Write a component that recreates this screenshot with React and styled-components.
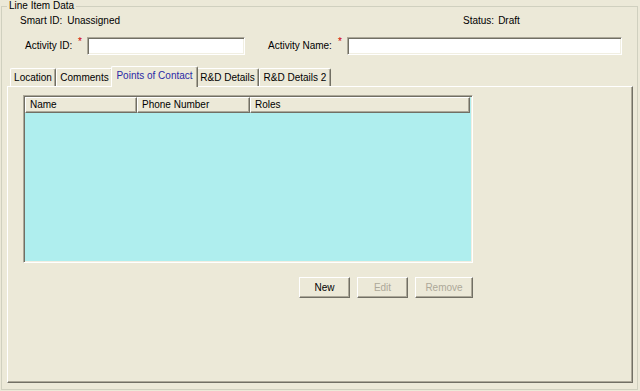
import React from "react";
import styled, { createGlobalStyle } from "styled-components";

const GlobalStyle = createGlobalStyle`
  html, body { margin: 0; padding: 0; background: #ece9d8; }
  body {
    font-family: "Liberation Sans", Arial, sans-serif;
    font-size: 10px;
    color: #000;
  }
  * { box-sizing: border-box; }
`;

const Window = styled.div`
  width: 640px;
  height: 391px;
  background: #ece9d8;
  overflow: hidden;
`;

const GroupBox = styled.fieldset`
  margin: 0 0 0 1px;
  width: 637px;
  height: 390px;
  min-width: 0;
  padding: 0 4px 6px 5px;
  border: 1px solid #d0d0bf;
`;

const Legend = styled.legend`
  padding: 0 2px;
  font-size: 10px;
  line-height: 12px;
`;

const Body = styled.div`
  display: flex;
  flex-direction: column;
  height: 371px;
`;

const InfoRow = styled.div`
  display: grid;
  grid-template-columns: 443px auto;
  margin-top: 3px;
  padding-left: 13px;
  line-height: 12px;
`;

const InfoItem = styled.div`
  display: flex;
  gap: ${(p) => p.$gap}px;
  white-space: nowrap;
`;

const FieldRow = styled.div`
  display: flex;
  align-items: center;
  height: 18px;
  margin-top: 10px;
  padding-left: 18px;
`;

const FieldLabel = styled.label`
  flex: none;
  width: ${(p) => p.$w}px;
  margin-left: ${(p) => p.$offset || 0}px;
  white-space: nowrap;
  line-height: 12px;
`;

const Required = styled.span`
  flex: none;
  align-self: flex-start;
  width: 13px;
  padding-left: 4px;
  color: #d00000;
  font-size: 10px;
  line-height: 10px;
`;

const TextInput = styled.input`
  flex: none;
  width: ${(p) => p.$w}px;
  height: 18px;
  margin: 0;
  padding: 0 3px;
  background: #fff;
  font: inherit;
  border: 1px solid;
  border-color: #aca899 #fff #fff #aca899;
  box-shadow: inset 1px 1px #716f64, inset -1px -1px #f1efe2;
  outline: none;
`;

const TabStrip = styled.div`
  display: flex;
  align-items: flex-end;
  height: 20px;
  margin-top: 11px;
  padding-left: 3px;
`;

const Tab = styled.div`
  position: relative;
  z-index: ${(p) => (p.$active ? 2 : 1)};
  flex: none;
  width: ${(p) => p.$w}px;
  height: ${(p) => (p.$active ? 21 : 18)}px;
  margin: 0 ${(p) => (p.$active ? -2 : 0)}px ${(p) => (p.$active ? -1 : 0)}px;
  padding-bottom: ${(p) => (p.$active ? 2 : 0)}px;
  display: flex;
  align-items: center;
  justify-content: center;
  background: #ece9d8;
  border-top: 1px solid #fff;
  border-left: 1px solid #fff;
  border-right: 1px solid #716f64;
  box-shadow: inset -1px 0 #aca899;
  border-radius: 2px 2px 0 0;
  color: ${(p) => (p.$active ? "#2a2aa6" : "#000")};
  white-space: nowrap;
  line-height: 12px;
`;

const Panel = styled.div`
  flex: 1;
  border: 1px solid;
  border-color: #fff #716f64 #716f64 #fff;
  box-shadow: inset -1px -1px #aca899;
  padding: 8px 0 0 15px;
`;

const Grid = styled.div`
  width: 450px;
  height: 168px;
  padding: 1px;
  display: flex;
  flex-direction: column;
  background: #afeeee;
  border: 1px solid;
  border-color: #aca899 #fff #fff #aca899;
  box-shadow: inset 1px 1px #716f64, inset -1px -1px #f1efe2;
`;

const GridHeader = styled.div`
  display: grid;
  grid-template-columns: 112px 113px 220px;
  height: 16px;
  flex: none;
`;

const HeaderCell = styled.div`
  background: #ece9d8;
  border-top: 1px solid #fff;
  border-left: 1px solid #fff;
  border-right: 1px solid #716f64;
  border-bottom: 1px solid #716f64;
  box-shadow: inset -1px -1px #aca899;
  padding-left: 4px;
  line-height: 13px;
  white-space: nowrap;
`;

const ButtonRow = styled.div`
  display: flex;
  justify-content: flex-end;
  gap: 7px;
  width: 450px;
  margin-top: 14px;
`;

const Button = styled.button`
  flex: none;
  width: ${(p) => p.$w}px;
  height: 21px;
  margin: 0;
  padding: 0;
  background: #ece9d8;
  font: inherit;
  color: ${(p) => (p.disabled ? "#aca899" : "#000")};
  border: 1px solid;
  border-color: #fff #716f64 #716f64 #fff;
  box-shadow: inset -1px -1px #aca899;
`;

const tabs = [
  { label: "Location", w: 46 },
  { label: "Comments", w: 57 },
  { label: "Points of Contact", w: 87, active: true },
  { label: "R&D Details", w: 63 },
  { label: "R&D Details 2", w: 72 },
];

export default function App() {
  return (
    <>
      <GlobalStyle />
      <Window>
        <GroupBox>
          <Legend>Line Item Data</Legend>
          <Body>
            <InfoRow>
              <InfoItem $gap={5}>
                <span>Smart ID:</span>
                <span>Unassigned</span>
              </InfoItem>
              <InfoItem $gap={4}>
                <span>Status:</span>
                <span>Draft</span>
              </InfoItem>
            </InfoRow>
            <FieldRow>
              <FieldLabel $w={49}>Activity ID:</FieldLabel>
              <Required>*</Required>
              <TextInput $w={158} />
              <FieldLabel $w={66} $offset={23}>Activity Name:</FieldLabel>
              <Required>*</Required>
              <TextInput $w={275} />
            </FieldRow>
            <TabStrip>
              {tabs.map((t) => (
                <Tab key={t.label} $w={t.w} $active={t.active}>
                  {t.label}
                </Tab>
              ))}
            </TabStrip>
            <Panel>
              <Grid>
                <GridHeader>
                  <HeaderCell>Name</HeaderCell>
                  <HeaderCell>Phone Number</HeaderCell>
                  <HeaderCell>Roles</HeaderCell>
                </GridHeader>
              </Grid>
              <ButtonRow>
                <Button $w={51}>New</Button>
                <Button $w={51} disabled>Edit</Button>
                <Button $w={58} disabled>Remove</Button>
              </ButtonRow>
            </Panel>
          </Body>
        </GroupBox>
      </Window>
    </>
  );
}
